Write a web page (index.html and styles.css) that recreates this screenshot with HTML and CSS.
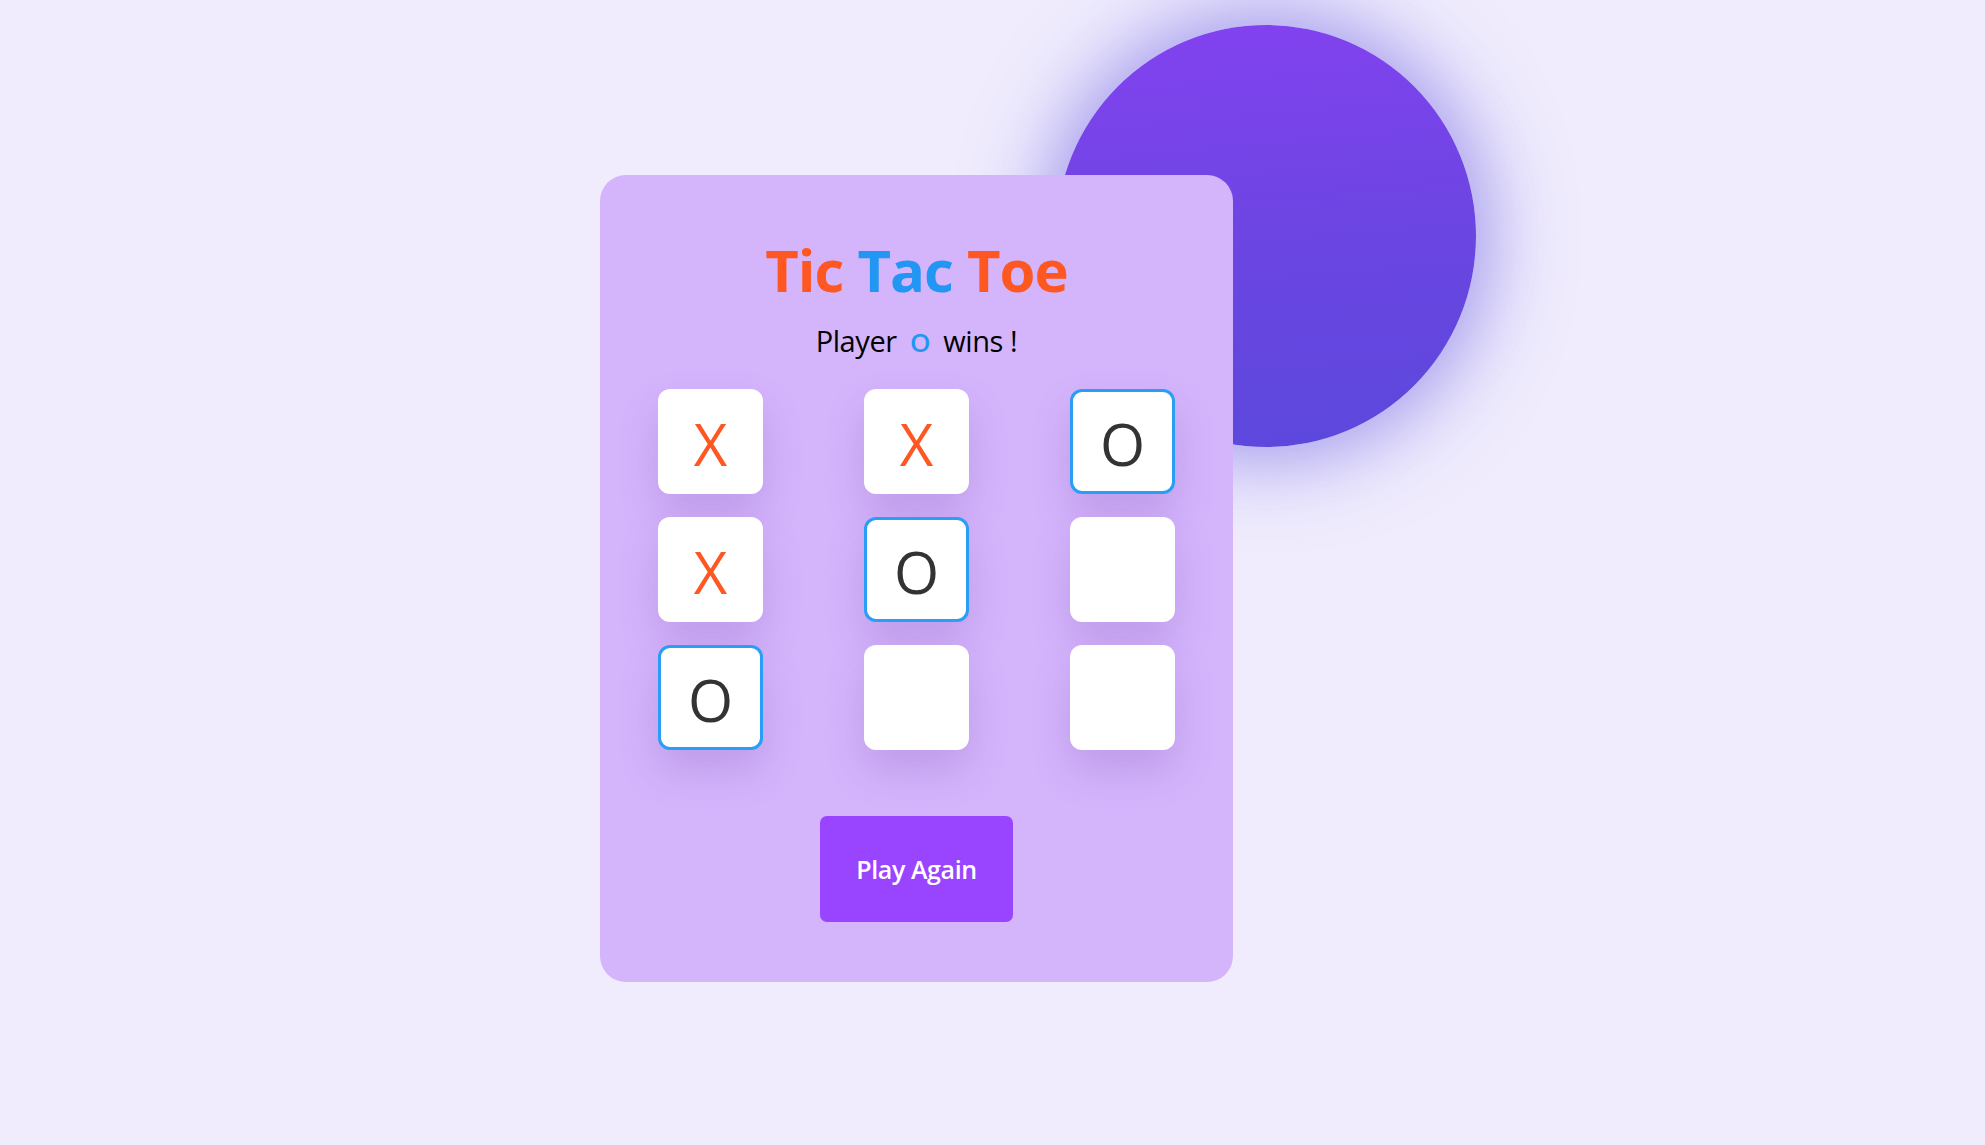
FILE: index.html
```html
<!DOCTYPE html>
<html lang="en">
<head>
<meta charset="utf-8">
<title>Tic Tac Toe</title>
<link rel="stylesheet" href="styles.css">
</head>
<body>
<div class="blob"></div>
<main class="page">
  <section class="card">
    <h1 class="title"><span class="x">Tic</span> <span class="o">Tac</span> <span class="x">Toe</span></h1>
    <p class="status">Player <span class="winner">O</span> wins !</p>
    <div class="board">
      <div class="cell x">X</div>
      <div class="cell x">X</div>
      <div class="cell o">O</div>
      <div class="cell x">X</div>
      <div class="cell o">O</div>
      <div class="cell"></div>
      <div class="cell o">O</div>
      <div class="cell"></div>
      <div class="cell"></div>
    </div>
    <button class="again">Play Again</button>
  </section>
</main>
</body>
</html>
```
FILE: styles.css
```css
* { box-sizing: border-box; }
html, body { margin: 0; padding: 0; }
body {
  background: #f0ecfd;
  min-height: 1145px;
  font-family: "Open Sans", "Noto Sans", sans-serif;
  overflow: hidden;
  position: relative;
}
.blob {
  position: absolute;
  left: 1056px;
  top: 25px;
  width: 420px;
  height: 422px;
  border-radius: 50%;
  background: linear-gradient(175deg, #8342f0 0%, #6c45e2 50%, #5b48dc 100%);
  box-shadow: 0 0 80px 12px rgba(90, 78, 222, 0.55);
}
.page {
  padding: 175px 0 0 600px;
}
.card {
  position: relative;
  width: 633px;
  height: 807px;
  background: #d4b5fc;
  border-radius: 26px;
  display: flex;
  flex-direction: column;
  align-items: center;
  padding-top: 55px;
}
.title {
  margin: 0;
  font-size: 58px;
  font-weight: 700;
  line-height: 80px;
  letter-spacing: -1px;
}
.x { color: #ff5722; }
.o { color: #2196f3; }
.status {
  margin: 12px 0 0;
  font-size: 29px;
  line-height: 38px;
  color: #000;
  font-weight: 400;
  letter-spacing: -0.4px;
}
.winner {
  color: #2196f3;
  font-weight: 600;
  font-size: 26px;
  margin: 0 6px;
}
.board {
  margin-top: 28px;
  display: grid;
  grid-template-columns: repeat(3, 105px);
  grid-auto-rows: 105px;
  column-gap: 101px;
  row-gap: 23px;
}
.cell {
  background: #fff;
  border-radius: 12px;
  display: flex;
  align-items: center;
  justify-content: center;
  font-size: 58px;
  font-weight: 400;
  color: #333;
  box-shadow: 0 20px 40px rgba(110, 50, 160, 0.2);
  padding-top: 4px;
}
.cell.x { color: #ff5722; }
.cell.o { color: #333; border: 3px solid #2a9df4; }
.again {
  margin-top: 66px;
  width: 193px;
  height: 106px;
  border: none;
  border-radius: 7px;
  background: #9945ff;
  color: #fff;
  font-family: "Open Sans", "Noto Sans", sans-serif;
  font-size: 25px;
  font-weight: 600;
  letter-spacing: -0.4px;
}
```
